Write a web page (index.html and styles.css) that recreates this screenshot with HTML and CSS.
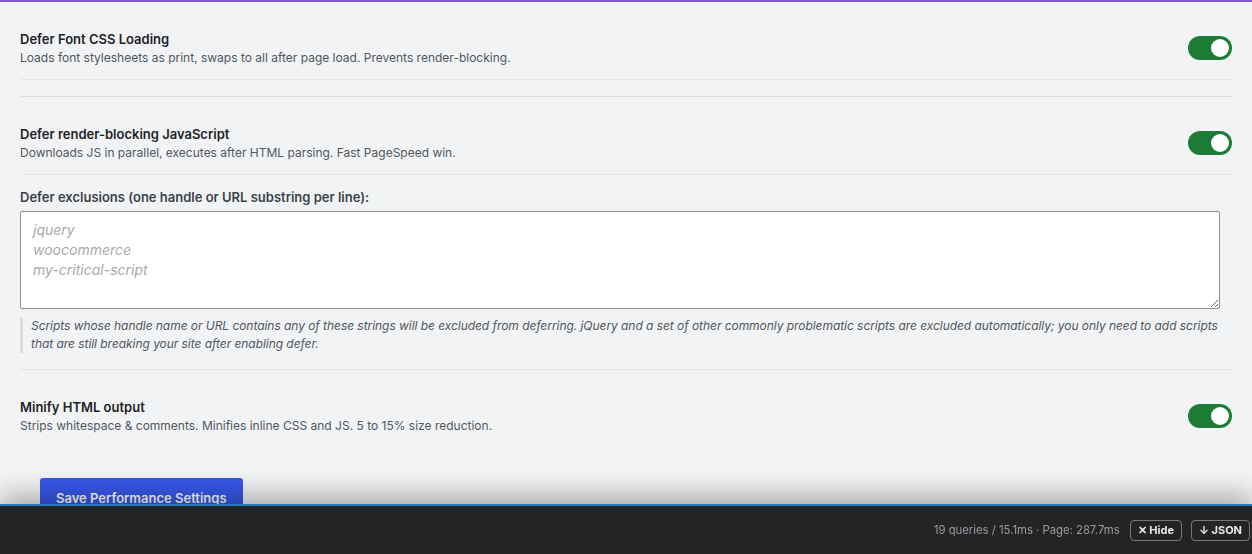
FILE: index.html
```html
<!DOCTYPE html>
<html lang="en">

<head>
    <meta charset="UTF-8">
    <meta name="viewport" content="width=device-width, initial-scale=1.0">
    <title>Performance Settings</title>
    <link rel="stylesheet" href="styles.css">
</head>

<body>
    <div class="wrap">
        <div class="opt-row">
            <div class="opt-text">
                <div class="opt-title">Defer Font CSS Loading</div>
                <div class="opt-desc">Loads font stylesheets as print, swaps to all after page load. Prevents render-blocking.</div>
            </div>
            <label class="switch"><input type="checkbox" checked><span class="slider"></span></label>
        </div>

        <hr class="sep">

        <div class="opt-row">
            <div class="opt-text">
                <div class="opt-title">Defer render-blocking JavaScript</div>
                <div class="opt-desc">Downloads JS in parallel, executes after HTML parsing. Fast PageSpeed win.</div>
            </div>
            <label class="switch"><input type="checkbox" checked><span class="slider"></span></label>
        </div>

        <div class="field">
            <label class="field-label" for="defer-ex">Defer exclusions (one handle or URL substring per line):</label>
            <textarea id="defer-ex" placeholder="jquery&#10;woocommerce&#10;my-critical-script"></textarea>
            <p class="help">Scripts whose handle name or URL contains any of these strings will be excluded from deferring. jQuery and a set of other commonly problematic scripts are excluded automatically; you only need to add scripts that are still breaking your site after enabling defer.</p>
        </div>

        <hr class="sep sep-light">

        <div class="opt-row no-border">
            <div class="opt-text">
                <div class="opt-title">Minify HTML output</div>
                <div class="opt-desc">Strips whitespace &amp; comments. Minifies inline CSS and JS. 5 to 15% size reduction.</div>
            </div>
            <label class="switch"><input type="checkbox" checked><span class="slider"></span></label>
        </div>

        <div class="actions">
            <button class="btn-primary" type="button">Save Performance Settings</button>
        </div>
    </div>

    <!-- debug bar pinned to the bottom of the window -->
    <div class="debugbar">
        <span class="debug-stats">19 queries / 15.1ms · Page: 287.7ms</span>
        <button class="debug-btn" type="button">✕ Hide</button>
        <button class="debug-btn" type="button">↓ JSON</button>
    </div>
</body>

</html>
```

FILE: styles.css
```css
body {
    margin: 0;
    background: #f2f3f5;
    border-top: 2px solid #8a52cf;
    font-family: Inter, "Noto Sans", "Liberation Sans", sans-serif;
    color: #1d2327;
    overflow: hidden;
}

.wrap {
    padding: 0 20px 120px 20px;
}

.opt-row {
    display: flex;
    align-items: center;
    justify-content: space-between;
    padding: 27px 0 12px 0;
    border-bottom: 1px solid #e6e7e9;
}

.opt-row.no-border {
    border-bottom: none;
}

.opt-title {
    font-size: 13px;
    line-height: 20px;
    font-weight: 600;
    color: #1d2327;
}

.opt-desc {
    font-size: 12px;
    line-height: 18px;
    color: #50575e;
}

.sep {
    margin: 16px 0 0 0;
    border: 0;
    border-top: 1px solid #dcdde0;
    height: 0;
}

.sep-light {
    border-top-color: #e3e4e6;
}

/* toggle switch */
.switch {
    position: relative;
    display: inline-block;
    width: 44px;
    height: 24px;
    flex-shrink: 0;
}

.switch input {
    display: none;
}

.slider {
    position: absolute;
    inset: 0;
    border-radius: 12px;
    background: #c3c4c7;
}

.slider::before {
    content: "";
    position: absolute;
    top: 3px;
    left: 3px;
    width: 18px;
    height: 18px;
    border-radius: 50%;
    background: #fff;
}

.switch input:checked + .slider {
    background: #1c7b34;
}

.switch input:checked + .slider::before {
    left: 23px;
}

.field {
    padding-top: 13px;
}

.field-label {
    display: block;
    font-size: 13px;
    line-height: 18px;
    font-weight: 600;
    color: #3c434a;
    margin-bottom: 5px;
}

.field textarea {
    display: block;
    box-sizing: border-box;
    width: 1200px;
    height: 98px;
    padding: 8px 12px;
    border: 1px solid #8c8f94;
    border-radius: 2px;
    background: #fff;
    font-family: inherit;
    font-size: 14px;
    line-height: 20px;
}

.field textarea::placeholder {
    color: #a7aaad;
    font-style: italic;
}

.help {
    margin: 8px 0 0 0;
    padding-left: 8px;
    border-left: 3px solid #dcdcde;
    font-size: 12px;
    line-height: 18px;
    font-style: italic;
    letter-spacing: -0.05px;
    color: #50575e;
}

.actions {
    padding: 31px 20px 0 20px;
}

.btn-primary {
    height: 40px;
    padding: 0 16px;
    border: 0;
    border-radius: 3px;
    background: #3858e9;
    color: #fff;
    font-family: inherit;
    font-size: 13px;
    font-weight: 600;
}

.debugbar {
    position: fixed;
    left: 0;
    right: 0;
    bottom: 0;
    height: 48px;
    display: flex;
    align-items: center;
    justify-content: flex-end;
    gap: 9px;
    padding-right: 2px;
    background: #242426;
    border-top: 2px solid #2579bd;
    box-shadow: 0 -8px 28px rgba(0, 0, 0, 0.32);
}

.debug-stats {
    margin-right: 1px;
    font-size: 11.3px;
    color: #9b9ca0;
}

.debug-btn {
    height: 21px;
    padding: 0 7px;
    border: 1px solid #76777b;
    border-radius: 4px;
    background: transparent;
    color: #e8e8ea;
    font-family: inherit;
    font-size: 11px;
    font-weight: 700;
}
```
